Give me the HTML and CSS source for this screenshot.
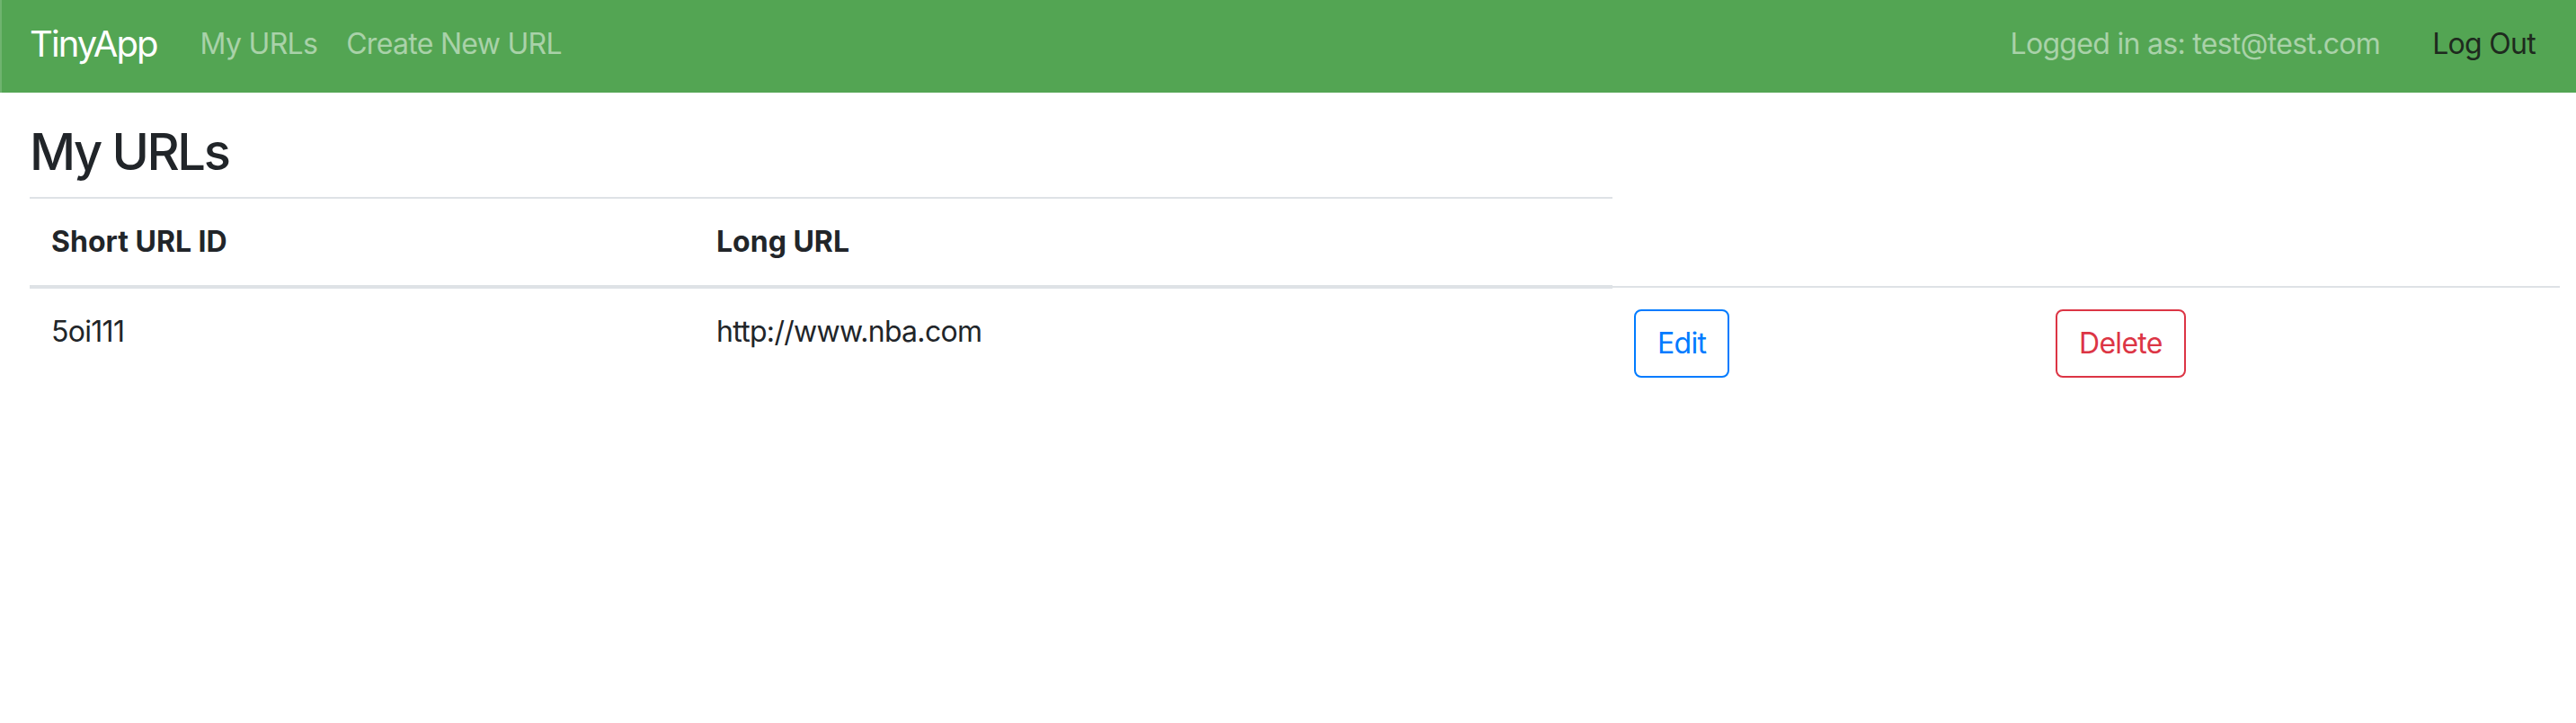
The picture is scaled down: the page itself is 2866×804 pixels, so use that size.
FILE: index.html
```html
<!DOCTYPE html>
<html lang="en">
<head>
<meta charset="utf-8">
<title>TinyApp</title>
<link rel="stylesheet" href="styles.css">
</head>
<body>
<nav class="navbar">
  <a class="brand" href="#">TinyApp</a>
  <ul class="nav-list">
    <li><a class="nav-link" href="#">My URLs</a></li>
    <li><a class="nav-link" href="#">Create New URL</a></li>
  </ul>
  <div class="nav-right">
    <span class="navbar-text">Logged in as: test@test.com</span>
    <a class="nav-link logout" href="#">Log Out</a>
  </div>
</nav>
<main class="container">
  <h2 class="title">My URLs</h2>
  <table class="table">
    <colgroup>
      <col class="col-id">
      <col class="col-long">
      <col class="col-edit">
      <col class="col-delete">
    </colgroup>
    <thead>
      <tr>
        <th>Short URL ID</th>
        <th>Long URL</th>
      </tr>
    </thead>
    <tbody>
      <tr>
        <td>5oi111</td>
        <td>http://www.nba.com</td>
        <td><a class="btn btn-primary-outline" href="#">Edit</a></td>
        <td><form class="inline-form"><button type="button" class="btn btn-danger-outline">Delete</button></form></td>
      </tr>
    </tbody>
  </table>
</main>
</body>
</html>
```
FILE: styles.css
```css
* { box-sizing: border-box; }

body {
  margin: 0;
  font-family: Inter, "Noto Sans", "Liberation Sans", sans-serif;
  font-size: 32px;
  line-height: 1.5;
  letter-spacing: -0.7px;
  color: #212529;
  background: #fff;
}

a { text-decoration: none; }

.navbar {
  display: flex;
  align-items: center;
  height: 103px;
  padding: 0 29px 6px 31px;
  background: #53a553;
  border-left: 2px solid #6fb46f;
}

.brand {
  color: #fff;
  font-size: 40px;
  line-height: 60px;
  letter-spacing: -1.9px;
  margin-right: 32px;
}

.nav-list {
  display: flex;
  list-style: none;
  margin: 0;
  padding: 0;
}

.nav-link {
  display: block;
  padding: 0 16px;
  color: rgba(255, 255, 255, 0.5);
  font-size: 32px;
  line-height: 48px;
}

.nav-right {
  margin-left: auto;
  display: flex;
  align-items: center;
  gap: 42px;
}

.navbar-text {
  color: rgba(255, 255, 255, 0.5);
  line-height: 48px;
}

.nav-link.logout {
  color: #1e2a1e;
}

.container {
  padding: 0 18px 0 33px;
}

.title {
  margin: 33px 0 16px;
  font-size: 56px;
  font-weight: 500;
  line-height: 1.2;
  letter-spacing: -2.4px;
}

.table {
  width: 100%;
  table-layout: fixed;
  border-collapse: collapse;
}

.col-id { width: 740px; }
.col-long { width: 1021px; }
.col-edit { width: 469px; }
.col-delete { width: 585px; }

.table th,
.table td {
  padding: 24px;
  text-align: left;
  vertical-align: top;
  border-top: 2px solid #dee2e6;
}

.table thead th {
  vertical-align: bottom;
  font-weight: 700;
  letter-spacing: 0;
  border-bottom: 4px solid #dee2e6;
}

.inline-form { margin: 0; }

.btn {
  display: inline-block;
  padding: 12px 24px;
  font-family: inherit;
  font-size: 32px;
  line-height: 48px;
  letter-spacing: -0.7px;
  background: transparent;
  border: 2px solid;
  border-radius: 8px;
  cursor: pointer;
}

.btn-primary-outline {
  color: #007bff;
  border-color: #007bff;
}

.btn-danger-outline {
  color: #dc3545;
  border-color: #dc3545;
}
```
